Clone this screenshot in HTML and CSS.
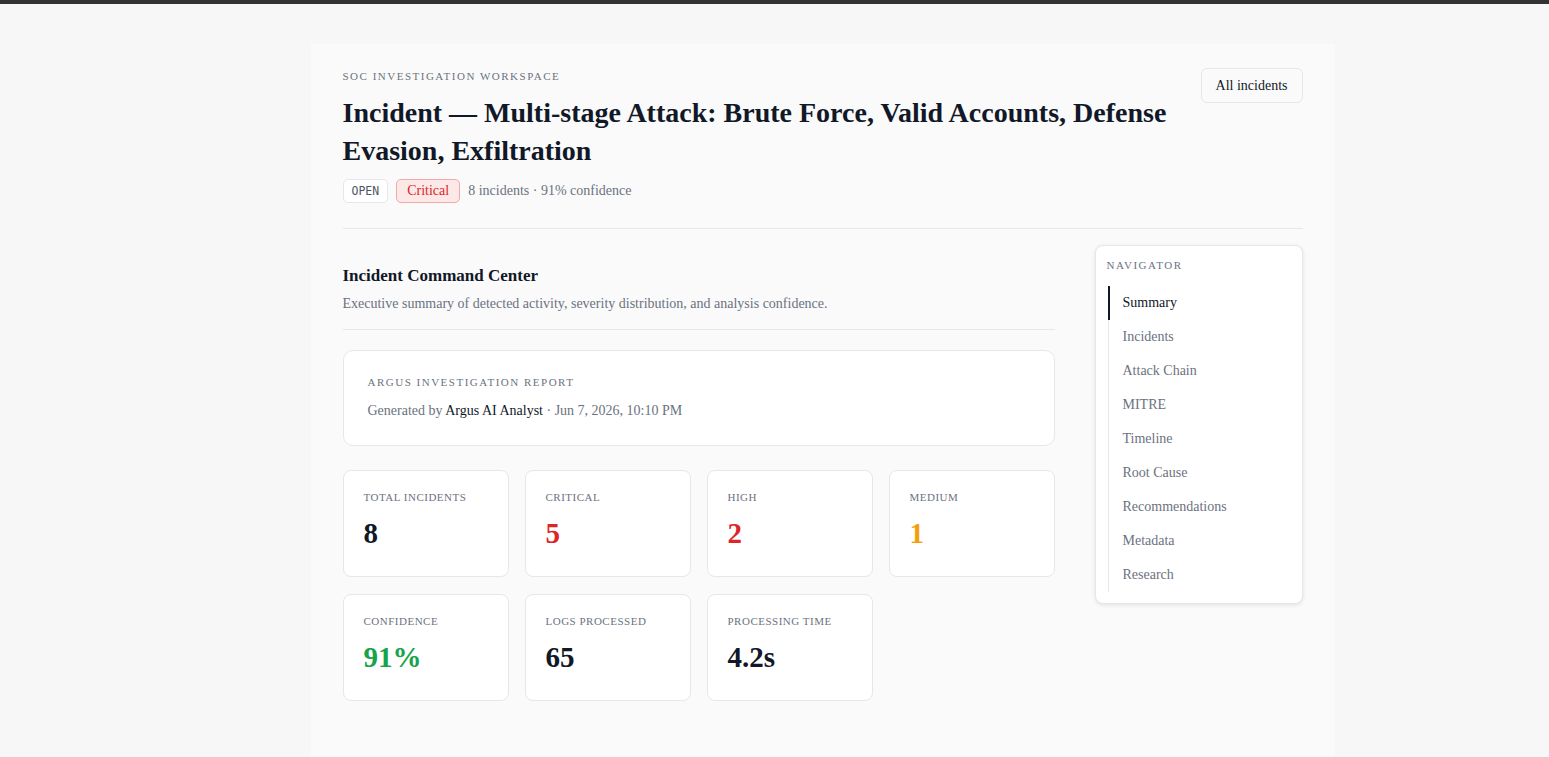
FILE: index.html
```html
<!DOCTYPE html>
<html lang="en">
<head>
  <meta charset="UTF-8" />
  <meta name="viewport" content="width=device-width, initial-scale=1.0"/>
  <title>Incident — SOC Investigation Workspace</title>
  <link rel="stylesheet" href="styles.css">
</head>
<body>
  <div class="topbar"></div>

  <div class="shell">
    <main class="workspace">
      <header class="page-header">
        <div class="page-heading">
          <div class="eyebrow">SOC Investigation Workspace</div>
          <h1>Incident — Multi-stage Attack: Brute Force, Valid Accounts, Defense Evasion, Exfiltration</h1>
          <div class="meta-row">
            <span class="badge badge-status">OPEN</span>
            <span class="badge badge-critical">Critical</span>
            <span class="meta-text">8 incidents · 91% confidence</span>
          </div>
        </div>
        <button class="btn">All incidents</button>
      </header>

      <div class="layout">
        <section class="content">
          <div class="section-head">
            <h2>Incident Command Center</h2>
            <p>Executive summary of detected activity, severity distribution, and analysis confidence.</p>
          </div>

          <div class="report-card">
            <div class="eyebrow">Argus Investigation Report</div>
            <div class="report-by">Generated by <span class="analyst">Argus AI Analyst</span> · Jun 7, 2026, 10:10 PM</div>
          </div>

          <div class="stats">
            <div class="stat">
              <div class="stat-label">Total incidents</div>
              <div class="stat-value">8</div>
            </div>
            <div class="stat">
              <div class="stat-label">Critical</div>
              <div class="stat-value red">5</div>
            </div>
            <div class="stat">
              <div class="stat-label">High</div>
              <div class="stat-value red">2</div>
            </div>
            <div class="stat">
              <div class="stat-label">Medium</div>
              <div class="stat-value amber">1</div>
            </div>
            <div class="stat">
              <div class="stat-label">Confidence</div>
              <div class="stat-value green">91%</div>
            </div>
            <div class="stat">
              <div class="stat-label">Logs processed</div>
              <div class="stat-value">65</div>
            </div>
            <div class="stat">
              <div class="stat-label">Processing time</div>
              <div class="stat-value">4.2s</div>
            </div>
          </div>
        </section>

        <aside class="navigator">
          <div class="eyebrow">Navigator</div>
          <nav class="nav-list">
            <a class="active">Summary</a>
            <a>Incidents</a>
            <a>Attack Chain</a>
            <a>MITRE</a>
            <a>Timeline</a>
            <a>Root Cause</a>
            <a>Recommendations</a>
            <a>Metadata</a>
            <a>Research</a>
          </nav>
        </aside>
      </div>
    </main>
  </div>
</body>
</html>
```

FILE: styles.css
```css
* {
  box-sizing: border-box;
}

body {
  margin: 0;
  background-color: #f7f7f7;
  color: #111827;
  font-family: 'Liberation Serif', 'Times New Roman', serif;
  height: 100vh;
  overflow: hidden;
}

.topbar {
  height: 4px;
  background-color: #333335;
}

.shell {
  padding-left: 96px;
}

.workspace {
  width: 1024px;
  margin: 40px auto 0;
  background-color: #fafafa;
  padding: 24px 32px 60px;
  min-height: 800px;
}

.eyebrow {
  font-size: 11px;
  letter-spacing: 1.5px;
  text-transform: uppercase;
  color: #6b7280;
}

.page-header {
  display: flex;
  justify-content: space-between;
  align-items: flex-start;
  gap: 24px;
  padding-bottom: 25px;
  border-bottom: 1px solid #e5e7eb;
}

.page-heading {
  padding-top: 2px;
}

h1 {
  font-size: 28px;
  line-height: 37.5px;
  font-weight: bold;
  margin: 12px 0 10px;
  color: #111827;
}

.meta-row {
  display: flex;
  align-items: center;
  gap: 8px;
}

.badge {
  display: inline-flex;
  align-items: center;
  height: 24px;
  padding: 0 10px;
  border-radius: 5px;
  border: 1px solid #e5e7eb;
  background-color: #fff;
  font-size: 14px;
}

.badge-status {
  font-family: 'DejaVu Sans Mono', 'Liberation Mono', monospace;
  font-size: 11.5px;
  color: #4b5563;
  padding: 0 8px;
}

.badge-critical {
  background-color: #fde8e8;
  border-color: #f1a9a9;
  color: #dc2626;
}

.meta-text {
  font-size: 14px;
  color: #6b7280;
}

.btn {
  flex-shrink: 0;
  border: 1px solid #e5e7eb;
  background-color: #fafafa;
  border-radius: 6px;
  font-family: inherit;
  font-size: 14px;
  color: #111827;
  height: 35px;
  padding: 0 14px;
  cursor: pointer;
}

.layout {
  display: flex;
  gap: 40px;
  padding-top: 16px;
  align-items: flex-start;
}

.content {
  flex: 1;
}

.section-head {
  padding-top: 21px;
  padding-bottom: 17px;
  border-bottom: 1px solid #e5e7eb;
  margin-bottom: 20px;
}

h2 {
  font-size: 17px;
  margin: 0 0 10px;
}

.section-head p {
  margin: 0;
  font-size: 14px;
  color: #6b7280;
}

.report-card {
  background-color: #fff;
  border: 1px solid #e5e7eb;
  border-radius: 10px;
  padding: 25px 24px 26px;
  margin-bottom: 24px;
}

.report-by {
  margin-top: 15px;
  font-size: 14px;
  color: #6b7280;
}

.analyst {
  color: #111827;
}

.stats {
  display: grid;
  grid-template-columns: repeat(4, 1fr);
  gap: 17px 16px;
}

.stat {
  background-color: #fff;
  border: 1px solid #e5e7eb;
  border-radius: 8px;
  height: 107px;
  padding: 20px 20px;
}

.stat-label {
  font-size: 11px;
  text-transform: uppercase;
  letter-spacing: 0.5px;
  color: #6b7280;
}

.stat-value {
  margin-top: 14px;
  font-size: 29px;
  font-weight: bold;
  color: #111827;
}

.stat-value.red {
  color: #dc2626;
}

.stat-value.amber {
  color: #f59e0b;
}

.stat-value.green {
  color: #16a34a;
}

.navigator {
  width: 208px;
  background-color: #fff;
  border: 1px solid #e5e7eb;
  border-radius: 8px;
  box-shadow: 0 1px 4px rgba(0, 0, 0, 0.1);
  padding: 13px 11px 11px;
}

.nav-list {
  display: flex;
  flex-direction: column;
  margin-top: 15px;
  margin-left: 1px;
  border-left: 1px solid #e5e7eb;
}

.nav-list a {
  display: block;
  font-size: 14px;
  color: #6b7280;
  line-height: 34px;
  padding-left: 13px;
  border-left: 2px solid transparent;
  margin-left: -1px;
  cursor: pointer;
}

.nav-list a.active {
  color: #111827;
  border-left-color: #111827;
}
```
